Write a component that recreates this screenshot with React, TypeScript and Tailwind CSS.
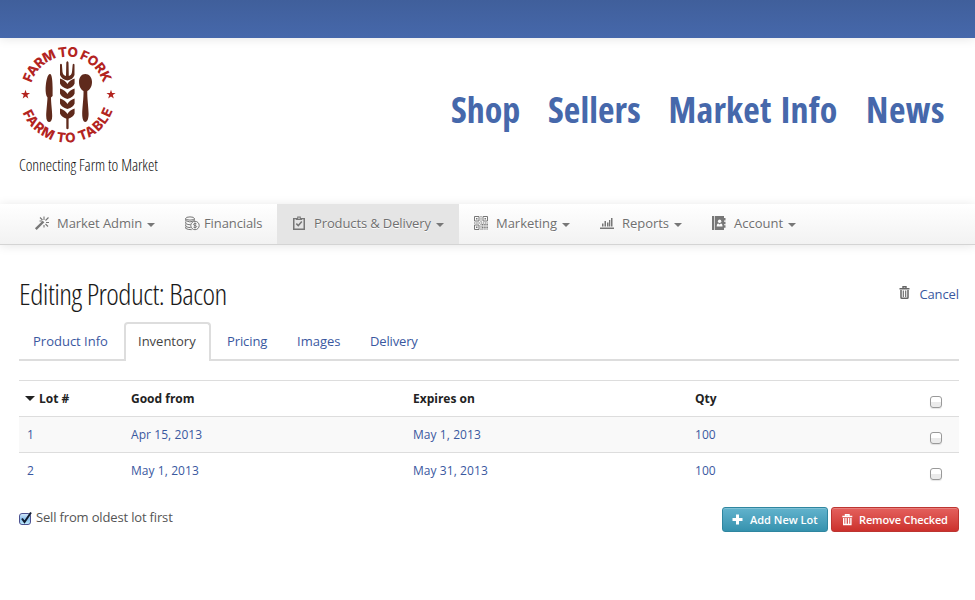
import type { ReactNode } from 'react';

const condensed = "font-['Open_Sans',sans-serif] [font-stretch:75%] whitespace-nowrap";

function Star({ x, y }: { x: number; y: number }) {
  return (
    <path
      transform={`translate(${x} ${y})`}
      fill="#b3241f"
      d="M0-4.8 1.1-1.6 4.6-1.5 1.8.6 2.8 3.9 0 2-2.8 3.9-1.8.6-4.6-1.5-1.1-1.6Z"
    />
  );
}

function Logo() {
  return (
    <svg width="98" height="100" viewBox="19 45 98 100" className="block overflow-visible">
      <defs>
        <path id="arc-top" d="M29.7 94.3A37.6 37.6 0 0 1 104.9 94.3" />
        <path id="arc-bottom" d="M19 94.3A48.3 48.3 0 0 0 115.6 94.3" />
      </defs>
      <g fill="#b3241f" className="font-['Inter',sans-serif] text-[13.4px] font-extrabold">
        <text textAnchor="middle" textLength="95" lengthAdjust="spacing">
          <textPath href="#arc-top" startOffset="50%">FARM TO FORK</textPath>
        </text>
        <text textAnchor="middle" textLength="116" lengthAdjust="spacing">
          <textPath href="#arc-bottom" startOffset="50.8%">FARM TO TABLE</textPath>
        </text>
      </g>
      <Star x={25.5} y={94.5} />
      <Star x={111} y={94.5} />
      <g fill="#5f2a1c">
        <path d="M50 74C47.500 74 46 81 45.600 88C45.500 92 46 96 47.500 97.500C47.300 103 46.200 111 46.200 116C46.200 120 47.500 122 49.200 122S52.200 120 52.200 116C52.200 111 51 103 51 97.500L52.600 96V88C52.600 82 52 74 50 74Z" />
        <path d="M85.300 74C81.500 74 79 77.500 79 82C79 87 81.500 90 83.500 91C83.800 97 82.200 108 82.200 114C82.200 119 83.500 122 85.300 122S88.600 119 88.600 114C88.600 108 87 97 87.300 91C89.500 90 92 87 92 82C92 77.500 89.200 74 85.300 74Z" />
        <path d="M60 64.500Q61 63 61.900 64.500L62.500 72Q63 75.500 66 76L66.300 62.500Q67.400 60 68.500 62.500L68.800 76Q71.500 75.500 72 72L72.700 64.500Q73.500 63 74.500 64.500V75Q73 79.500 67.400 80.500Q62 79.500 60 75Z" />
        {[79, 89, 99, 109].map((y) => (
          <path
            key={y}
            transform={`translate(67.400 ${y})`}
            d="M-7.400-.5Q-2 1 0 5Q2 1 7.200-.5V4.500Q6 8 0 10Q-6 8-7.400 4.500Z"
          />
        ))}
        <path d="M66.300 116H68.600V128.500Q67.400 130 66.300 128.500Z" />
      </g>
    </svg>
  );
}

function Caret() {
  return <span className="ml-[5px] mt-px border-x-4 border-t-4 border-x-transparent border-t-[#777]" />;
}

const icons: Record<string, ReactNode> = {
  wand: (
    <g stroke="#777" fill="none">
      <path d="M.8 13.200 8.500 5.500" strokeWidth="2.400" />
      <path d="M9 4V.5M10.500 4.500l3-3M11 6.500h3M10.500 8l2.500 2.500M7.500 4 5 1.500M9 9v2.500M4.500 5H7" strokeWidth="1.100" />
    </g>
  ),
  coins: (
    <g stroke="#777" fill="none" strokeWidth="1">
      <ellipse cx="5" cy="2.500" rx="4.300" ry="1.600" />
      <path d="M.7 2.500v2.200q4 2.500 8.600 0V2.500M.7 5.500v2q2 1.300 5 1.300M.7 8.300v2q2 1.300 5 1.300M.7 11v1.400q2 1.300 6 1.300" />
      <circle cx="10" cy="9.500" r="4.200" fill="#fafafa" />
      <path d="M11.500 7.800q-3-1-3 .5 0 1 1.600 1.200 1.600.3 1.600 1.200 0 1.500-3.200.5M10 6.500v6" />
    </g>
  ),
  clipboard: (
    <g stroke="#777" fill="none">
      <path d="M1.750 3v10.250h10.500V3" strokeWidth="1.500" />
      <path d="M1 2.700h3M10 2.700h3M4.500 3.500h5v-1h-1.300V1H5.800v1.500H4.500z" strokeWidth="1.200" />
      <path d="m4.300 7.600 2 2 3.500-4" strokeWidth="1.500" />
    </g>
  ),
  qr: (
    <g stroke="#777" fill="none">
      <path d="M.5.500h4.500v4.500H.5zM9 .5h4.500v4.500H9zM.5 9h4.500v4.500H.5z" />
      <path d="M2 2.750h1.500M10.500 2.750h1.500M2 11.250h1.500" strokeWidth="1.500" />
      <path d="M7 0v6M0 7h14M7 8v6M8 8.500h6M8 10h6M8 11.500h6M8 13h6" strokeDasharray="1.500 .7" />
    </g>
  ),
  chart: (
    <path fill="#777" d="M0 11.500h14V13H0zM2 7.500h1.500v3H2zM4.500 5H6v5.500H4.500zM7 6.500h1.500v4H7zM9 4h1.300v6.500H9zM11 2h1.500v8.500H11z" />
  ),
  book: (
    <g>
      <path fill="#777" d="M0 0h2.300v14H0zM3 0h9v2h1.500v2.500H12v1.200h1.500v2.500H12v1.100h1.500v2.500H12V14H3z" />
      <circle cx="7.600" cy="5.300" r="1.700" fill="#fafafa" />
      <path fill="#fafafa" d="M4.700 10.500q0-3 1.600-3l1.300 1 1.300-1q1.600 0 1.600 3z" />
    </g>
  ),
  trash: (
    <g fill="none" stroke="currentColor">
      <path d="M.5 2.750h10M4 2V.7h3V2" strokeWidth="1.400" />
      <path d="M2 4v7.500q0 .8.800.8h5.400q.8 0 .8-.8V4" strokeWidth="1.500" />
      <path d="M4.300 4.500V11M6.700 4.500V11" strokeWidth="1.100" />
    </g>
  ),
};

function Icon({ name, className = '' }: { name: string; className?: string }) {
  return (
    <svg width="14" height="14" viewBox="0 0 14 14" className={`block shrink-0 overflow-visible ${className}`}>
      {icons[name]}
    </svg>
  );
}

const navItems = [
  { label: 'Market Admin', icon: 'wand', caret: true, box: 'w-[150px] pl-4', gap: 'ml-2 tracking-[-0.06px]' },
  { label: 'Financials', icon: 'coins', caret: false, box: 'w-[108px] pl-4', gap: 'ml-[5px] tracking-[-0.1px]' },
  { label: 'Products & Delivery', icon: 'clipboard', caret: true, box: 'w-[182px] bg-[#e5e5e5] pl-[15px]', gap: 'ml-2 tracking-[-0.12px]' },
  { label: 'Marketing', icon: 'qr', caret: true, box: 'w-[126px] pl-[15px]', gap: 'ml-2 tracking-[-0.03px]' },
  { label: 'Reports', icon: 'chart', caret: true, box: 'w-[112px] pl-[15px]', gap: 'ml-2 tracking-[-0.03px]' },
  { label: 'Account', icon: 'book', caret: true, box: 'w-[116px] pl-[15px]', gap: 'ml-2' },
];

const mainLinks = [
  { label: 'Shop', width: 'w-[97px]' },
  { label: 'Sellers', width: 'w-[120.500px] tracking-[0.1px]' },
  { label: 'Market Info', width: 'w-[197.500px] tracking-[0.2px] [word-spacing:2.500px]' },
  { label: 'News', width: 'w-[80px] tracking-[0.5px]' },
];

const tabs = [
  { label: 'Product Info', box: 'w-[105px] pl-[14px]' },
  { label: 'Inventory', box: '' },
  { label: 'Pricing', box: 'w-[70px] pl-4 tracking-[-0.1px]' },
  { label: 'Images', box: 'w-[73px] pl-4' },
  { label: 'Delivery', box: 'w-[80px] pl-4 tracking-[-0.15px]' },
];

const lots = [
  ['1', 'Apr 15, 2013', 'May 1, 2013', '100'],
  ['2', 'May 1, 2013', 'May 31, 2013', '100'],
];

function Checkbox() {
  return (
    <span className="mt-[7px] ml-auto mr-[17px] block size-3 rounded-[3px] border border-[#999] bg-linear-to-b from-white from-50% to-[#ebebeb] to-50% shadow-[0_1px_1px_#0000001a]" />
  );
}

const rowGrid = 'grid h-9 grid-cols-[104px_282px_282px_1fr_60px] items-center border-t border-[#ddd] leading-[18px]';

export default function App() {
  return (
    <div className="h-[600px] w-[975px] overflow-hidden bg-white font-['Open_Sans',sans-serif] text-[13px] leading-[18px] text-[#3a589f]">
      <div className="h-[38px] bg-linear-to-b from-[#405f9b] to-[#4668ab] shadow-[0_1px_10px_#0000001a]" />
      <header className="flex h-[166px] justify-between pl-[19px] pr-[29px]">
        <div className="w-[200px] pt-[7px]">
          <Logo />
          <p className={`${condensed} mt-[10px] text-base leading-5 font-[330] tracking-[-0.08px] text-[#111]`}>Connecting Farm to Market</p>
        </div>
        <nav className={`${condensed} flex pt-[48px] text-[36px] leading-[48px] font-bold text-[#4668ab]`}>
          {mainLinks.map((l) => (
            <a key={l.label} className={l.width}>{l.label}</a>
          ))}
        </nav>
      </header>
      <nav className="flex h-[41px] border-b border-[#d4d4d4] bg-linear-to-b from-white to-[#f2f2f2] pl-[19px] text-[#707070] shadow-[0_1px_10px_#0000001a] [text-shadow:0_1px_0_#fff]">
        {navItems.map((n) => (
          <a key={n.label} className={`flex items-center whitespace-nowrap ${n.box}`}>
            <Icon name={n.icon} className="-mt-[2px]" />
            <span className={`${n.gap} -mt-[3px]`}>{n.label}</span>
            {n.caret && <Caret />}
          </a>
        ))}
      </nav>
      <main className="px-4 pl-[19px]">
        <div className="flex h-[77px] justify-between pt-[29px]">
          <h1 className={`${condensed} text-[30px] leading-10 font-[320] tracking-[-0.53px] text-[#1a1a1a]`}>Editing Product: Bacon</h1>
          <a className="flex h-9 items-center pt-px">
            <Icon name="trash" className="mr-[6px] mt-px text-[#666]" />
            <span className="mt-[2px] tracking-[-0.1px]">Cancel</span>
          </a>
        </div>
        <div className="flex h-[39px] shadow-[inset_0_-2px_#ddd]">
          {tabs.map((t) =>
            t.label === 'Inventory' ? (
              <a key={t.label} className="h-[39px] w-[87px] rounded-t-[4px] border-2 border-b-0 border-[#ddd] bg-white pt-[8px] pl-3 text-[#444]">
                {t.label}
              </a>
            ) : (
              <a key={t.label} className={`pt-[10px] ${t.box}`}>{t.label}</a>
            ),
          )}
        </div>
        <div className="mt-[19px] text-xs">
          <div className={`${rowGrid} font-bold text-[#222]`}>
            <span className="flex items-center pl-[6px]">
              <span className="mr-1 border-x-5 border-t-5 border-x-transparent border-t-[#222]" />
              Lot #
            </span>
            <span className="pl-2">Good from</span>
            <span className="pl-2">Expires on</span>
            <span className="pl-2">Qty</span>
            <Checkbox />
          </div>
          {lots.map((row, i) => (
            <div key={row[0]} className={`${rowGrid} ${i === 0 ? 'bg-[#f9f9f9]' : ''}`}>
              {row.map((cell, c) => (
                <span key={c} className="pl-2 tracking-[0.07px]">{cell}</span>
              ))}
              <Checkbox />
            </div>
          ))}
        </div>
        <div className="flex justify-between pt-[19px]">
          <label className="mt-px flex h-[18px] tracking-[-0.16px] text-[#555]">
            <svg width="14" height="15" viewBox="0 0 14 15" className="mt-[3px] mr-[3px] block">
              <defs>
                <linearGradient id="check-fill" x2="0" y2="1">
                  <stop stopColor="#d8eafa" />
                  <stop offset=".5" stopColor="#8bc0ee" />
                  <stop offset="1" stopColor="#c5f1ff" />
                </linearGradient>
              </defs>
              <rect x=".5" y="2.500" width="11" height="11" rx="2.500" fill="url(#check-fill)" stroke="#4d5291" />
              <path d="m3 7.500 2.500 3.500L12 1.500" fill="none" stroke="#111c30" strokeWidth="2" />
            </svg>
            Sell from oldest lot first
          </label>
          <div className="flex gap-[3px] text-[11px] font-semibold text-white [text-shadow:0_-1px_0_#00000040]">
            <button className="flex h-[25px] w-[106px] items-center rounded-[3px] border border-[#2f86a0] bg-linear-to-b from-[#62b3cd] to-[#3592ae] pl-[9px] shadow-[inset_0_1px_#ffffff33]">
              <svg width="11" height="11" viewBox="0 0 11 11" className="mr-[7px] -mt-px">
                <path fill="white" d="M4 .5h3V4h3.500v3H7v3.500H4V7H.5V4H4z" />
              </svg>
              Add New Lot
            </button>
            <button className="flex h-[25px] w-[128px] items-center rounded-[3px] border border-[#bd3531] bg-linear-to-b from-[#e4605d] to-[#cc302c] pl-[10px] tracking-[-0.15px] shadow-[inset_0_1px_#ffffff33]">
              <svg width="11" height="12" viewBox="0 0 11 12" className="mr-[6px]" fill="none" stroke="white">
                <path d="M.3 2.500h10M3.500 2V.7h3.500V2M1.700 4v6.500h7.200V4M4 4v6M6.600 4v6" strokeWidth="1.400" />
              </svg>
              Remove Checked
            </button>
          </div>
        </div>
      </main>
    </div>
  );
}
